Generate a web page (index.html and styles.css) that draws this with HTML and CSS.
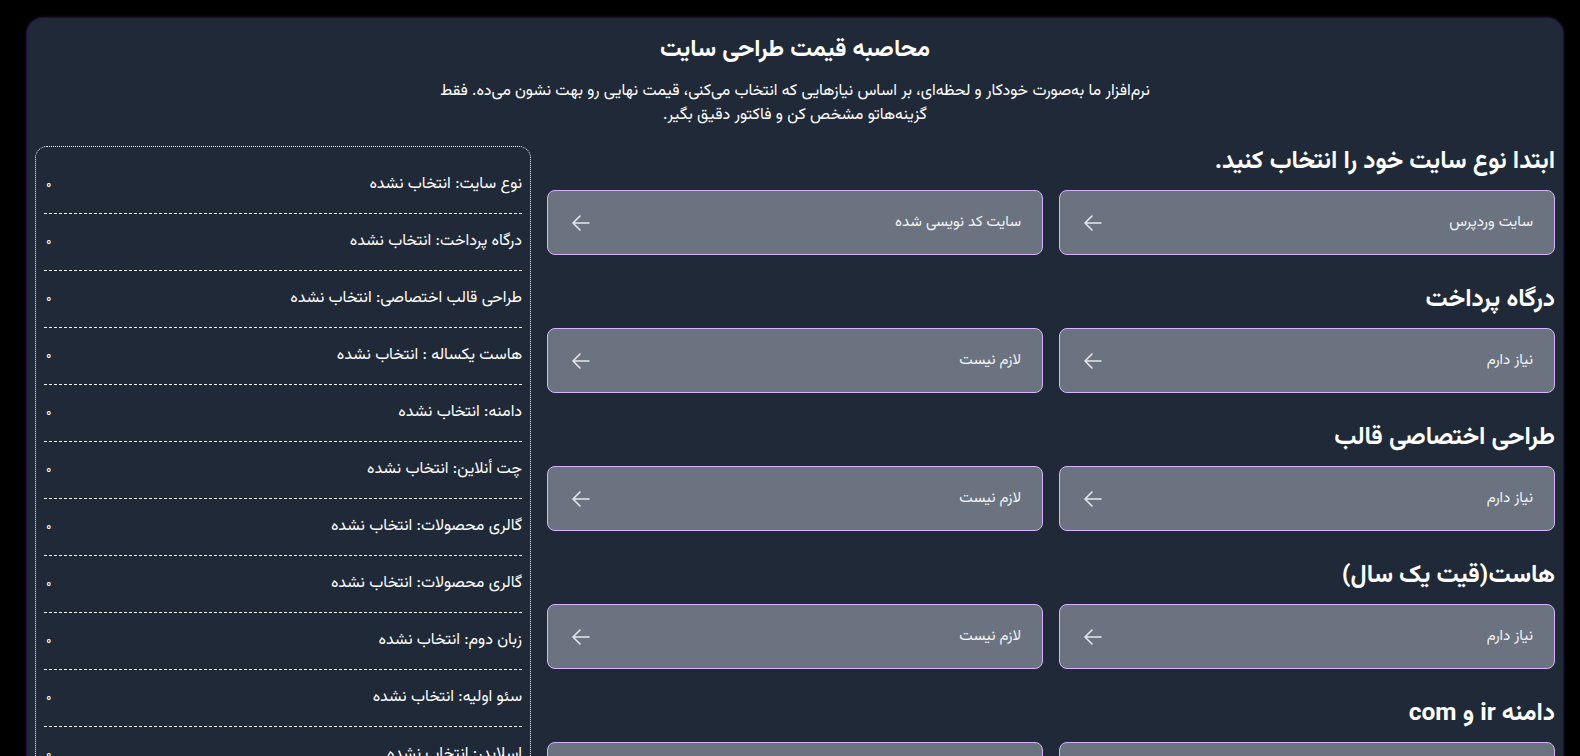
FILE: index.html
```html
<!DOCTYPE html>
<html lang="fa" dir="rtl">
<head>
  <meta charset="UTF-8" />
  <meta name="viewport" content="width=device-width, initial-scale=1.0"/>
  <title>محاسبه قیمت طراحی سایت</title>
  <link rel="stylesheet" href="styles.css">
</head>
<body>

  <div class="calc-card">
    <header class="calc-head">
      <h1>محاصبه قیمت طراحی سایت</h1>
      <p>نرم‌افزار ما به‌صورت خودکار و لحظه‌ای، بر اساس نیازهایی که انتخاب می‌کنی، قیمت نهایی رو بهت نشون می‌ده. فقط گزینه‌هاتو مشخص کن و فاکتور دقیق بگیر.</p>
    </header>

    <div class="calc-main">
      <!-- options -->
      <div class="options">
        <section class="step">
          <h2>ابتدا نوع سایت خود را انتخاب کنید.</h2>
          <div class="choices">
            <button class="choice"><span>سایت وردپرس</span><svg viewBox="0 0 24 24"><path d="M20 12H4M11 5l-7 7 7 7"/></svg></button>
            <button class="choice"><span>سایت کد نویسی شده</span><svg viewBox="0 0 24 24"><path d="M20 12H4M11 5l-7 7 7 7"/></svg></button>
          </div>
        </section>

        <section class="step">
          <h2>درگاه پرداخت</h2>
          <div class="choices">
            <button class="choice"><span>نیاز دارم</span><svg viewBox="0 0 24 24"><path d="M20 12H4M11 5l-7 7 7 7"/></svg></button>
            <button class="choice"><span>لازم نیست</span><svg viewBox="0 0 24 24"><path d="M20 12H4M11 5l-7 7 7 7"/></svg></button>
          </div>
        </section>

        <section class="step">
          <h2>طراحی اختصاصی قالب</h2>
          <div class="choices">
            <button class="choice"><span>نیاز دارم</span><svg viewBox="0 0 24 24"><path d="M20 12H4M11 5l-7 7 7 7"/></svg></button>
            <button class="choice"><span>لازم نیست</span><svg viewBox="0 0 24 24"><path d="M20 12H4M11 5l-7 7 7 7"/></svg></button>
          </div>
        </section>

        <section class="step">
          <h2>هاست(قیت یک سال)</h2>
          <div class="choices">
            <button class="choice"><span>نیاز دارم</span><svg viewBox="0 0 24 24"><path d="M20 12H4M11 5l-7 7 7 7"/></svg></button>
            <button class="choice"><span>لازم نیست</span><svg viewBox="0 0 24 24"><path d="M20 12H4M11 5l-7 7 7 7"/></svg></button>
          </div>
        </section>

        <section class="step">
          <h2>دامنه ir و com</h2>
          <div class="choices">
            <button class="choice"><span>نیاز دارم</span><svg viewBox="0 0 24 24"><path d="M20 12H4M11 5l-7 7 7 7"/></svg></button>
            <button class="choice"><span>لازم نیست</span><svg viewBox="0 0 24 24"><path d="M20 12H4M11 5l-7 7 7 7"/></svg></button>
          </div>
        </section>
      </div>

      <!-- summary -->
      <ul class="summary">
        <li><span>نوع سایت: انتخاب نشده</span><span class="price">۰</span></li>
        <li><span>درگاه پرداخت: انتخاب نشده</span><span class="price">۰</span></li>
        <li><span>طراحی قالب اختصاصی: انتخاب نشده</span><span class="price">۰</span></li>
        <li><span>هاست یکساله : انتخاب نشده</span><span class="price">۰</span></li>
        <li><span>دامنه: انتخاب نشده</span><span class="price">۰</span></li>
        <li><span>چت أنلاین: انتخاب نشده</span><span class="price">۰</span></li>
        <li><span>گالری محصولات: انتخاب نشده</span><span class="price">۰</span></li>
        <li><span>گالری محصولات: انتخاب نشده</span><span class="price">۰</span></li>
        <li><span>زبان دوم: انتخاب نشده</span><span class="price">۰</span></li>
        <li><span>سئو اولیه: انتخاب نشده</span><span class="price">۰</span></li>
        <li><span>اسلایدر: انتخاب نشده</span><span class="price">۰</span></li>
      </ul>
    </div>
  </div>

</body>
</html>
```

FILE: styles.css
```css
* {
  box-sizing: border-box;
  margin: 0;
  padding: 0;
}

body {
  font-family: Vazirmatn, "Noto Sans Arabic", "DejaVu Sans", sans-serif;
  background: #000;
  color: #fff;
}

.calc-card {
  margin: 18px 17px 0 27px;
  padding: 16px 8px 40px;
  background: #1f2937;
  border-radius: 16px;
  box-shadow: 0 0 3px rgba(147, 51, 234, 0.7);
}

.calc-head {
  text-align: center;
}

.calc-head h1 {
  font-size: 24px;
  line-height: 32px;
  font-weight: 700;
}

.calc-head p {
  max-width: 740px;
  margin: 14px auto 0;
  font-size: 16px;
  line-height: 24px;
}

.calc-main {
  display: grid;
  grid-template-columns: repeat(3, 1fr);
  gap: 16px;
  align-items: start;
  margin-top: 18px;
}

.options {
  grid-column: span 2;
}

.step {
  margin-bottom: 29px;
}

.step h2 {
  font-size: 24.5px;
  line-height: 32px;
  font-weight: 700;
  margin-bottom: 12px;
}

.choices {
  display: grid;
  grid-template-columns: 1fr 1fr;
  gap: 16px;
}

.choice {
  display: flex;
  align-items: center;
  justify-content: space-between;
  height: 65px;
  padding: 0 21px;
  background: #6b7280;
  border: 1px solid #d8b4fe;
  border-radius: 8px;
  color: #f3f4f6;
  font-family: inherit;
  font-size: 15px;
  cursor: pointer;
}

.choice svg {
  width: 24px;
  height: 24px;
  fill: none;
  stroke: #e5e7eb;
  stroke-width: 1.6;
  stroke-linecap: round;
  stroke-linejoin: round;
}

.summary {
  list-style: none;
  border: 1px dotted #fff;
  border-radius: 12px;
  padding: 10px 8px;
}

.summary li {
  display: flex;
  justify-content: space-between;
  align-items: center;
  padding: 16px 0;
  font-size: 16px;
  line-height: 24px;
  border-bottom: 1px dashed #fff;
}

.summary .price {
  font-size: 13px;
  padding-left: 2px;
}
```
